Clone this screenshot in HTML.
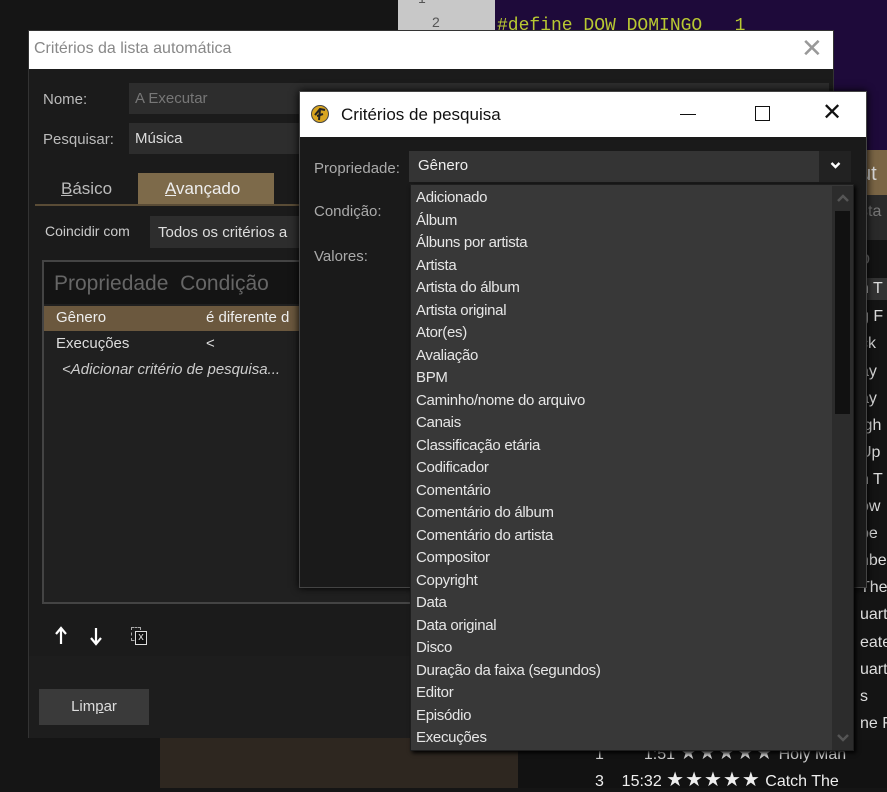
<!DOCTYPE html>
<html><head><meta charset="utf-8"><style>
*{margin:0;padding:0;box-sizing:border-box}
body{width:887px;height:788px;overflow:hidden;position:relative;background:#151515;font-family:"Liberation Sans","DejaVu Sans",sans-serif;font-size:15px;color:#ddd}
.a{position:absolute}
.it{position:absolute;left:5px;font-size:15px;color:#e6e6e6;letter-spacing:-0.3px}
.rt{position:absolute;left:860px;color:#ddd;font-size:16px;white-space:nowrap}
</style></head><body>
<div class="a" style="left:398px;top:0;width:97px;height:30px;background:#c8c8c8"></div>
<div class="a" style="left:418px;top:-10px;color:#555;font-size:14px">1</div>
<div class="a" style="left:432px;top:14px;color:#555;font-size:14px">2</div>
<div class="a" style="left:495px;top:0;width:392px;height:160px;background:#1e0a3a"></div>
<div class="a" style="left:497px;top:16px;color:#b8c832;font-family:'Liberation Mono',monospace;font-size:18px;white-space:pre">#define DOW_DOMINGO   1</div>
<div class="a" style="left:160px;top:738px;width:360px;height:50px;background:#2e2720"></div>
<div class="a" style="left:518px;top:738px;width:369px;height:50px;background:#121212"></div>
<div class="a" style="left:855px;top:150px;width:32px;height:45px;background:#7a6545"></div>
<div class="a" style="left:855px;top:195px;width:32px;height:45px;background:#2a2a2a"></div>
<div class="a" style="left:855px;top:240px;width:32px;height:500px;background:#141414"></div>
<div class="a" style="left:855px;top:278px;width:32px;height:22px;background:#333"></div>
<div class="rt" style="top:163px;font-size:20px">ut</div>
<div class="rt" style="top:203px;color:#777">sta</div>
<div class="rt" style="top:248px;color:#777;font-size:18px">o</div>
<div class="rt" style="top:280px">n T</div>
<div class="rt" style="top:308px">g F</div>
<div class="rt" style="top:335px">ck</div>
<div class="rt" style="top:363px">ay</div>
<div class="rt" style="top:390px">ay</div>
<div class="rt" style="top:417px">igh</div>
<div class="rt" style="top:444px">Up</div>
<div class="rt" style="top:471px">n T</div>
<div class="rt" style="top:498px">ow</div>
<div class="rt" style="top:525px">pe</div>
<div class="rt" style="top:552px">nbe</div>
<div class="rt" style="top:579px">The</div>
<div class="rt" style="top:606px">uart</div>
<div class="rt" style="top:634px">eate</div>
<div class="rt" style="top:661px">uart</div>
<div class="rt" style="top:688px">s</div>
<div class="rt" style="top:715px">ne Fo</div>
<div class="a" style="left:595px;top:740px;color:#ccc;font-size:16px;white-space:nowrap">1&nbsp;&nbsp;&nbsp;&nbsp;&nbsp;&nbsp;&nbsp;&nbsp;&nbsp;1:51 <span style="font-size:20px;letter-spacing:1px">★★★★★</span> Holy Man</div>
<div class="a" style="left:595px;top:767px;color:#eee;font-size:16px;white-space:nowrap">3&nbsp;&nbsp;&nbsp;&nbsp;15:32 <span style="font-size:20px;letter-spacing:1px">★★★★★</span> Catch The</div>

<div class="a" style="left:28px;top:30px;width:806px;height:708px;background:#1b1b1b;border:1px solid #333">
  <div class="a" style="left:0;top:0;width:804px;height:38px;background:#fff"></div>
  <div class="a" style="left:5px;top:9px;color:#888;font-size:16px">Critérios da lista automática</div>
  <div class="a" style="left:772px;top:2px;color:#999;font-size:26px;font-weight:100">✕</div>
  <div class="a" style="left:14px;top:60px;color:#bbb">Nome:</div>
  <div class="a" style="left:100px;top:52px;width:700px;height:31px;background:#2d2d2d"></div>
  <div class="a" style="left:106px;top:59px;color:#777">A Executar</div>
  <div class="a" style="left:14px;top:100px;color:#bbb">Pesquisar:</div>
  <div class="a" style="left:100px;top:92px;width:700px;height:31px;background:#2d2d2d"></div>
  <div class="a" style="left:106px;top:99px;color:#ddd">Música</div>
  <div class="a" style="left:32px;top:148px;font-size:17px;color:#bbb"><u>B</u>ásico</div>
  <div class="a" style="left:109px;top:142px;width:136px;height:32px;background:#7d6a4a"></div>
  <div class="a" style="left:136px;top:148px;font-size:17px;color:#eee"><u>A</u>vançado</div>
  <div class="a" style="left:6px;top:173px;width:300px;height:2px;background:#5a4c36"></div>
  <div class="a" style="left:16px;top:192px;color:#ccc;font-size:14px">Coincidir com</div>
  <div class="a" style="left:121px;top:185px;width:200px;height:32px;background:#2d2d2d"></div>
  <div class="a" style="left:129px;top:193px;color:#ddd;font-size:15px">Todos os critérios a</div>
  <div class="a" style="left:13px;top:229px;width:760px;height:344px;background:#202020;border:2px solid #444"></div>
  <div class="a" style="left:15px;top:231px;width:756px;height:42px;background:#141414"></div>
  <div class="a" style="left:25px;top:241px;color:#666;font-size:21px">Propriedade&nbsp;&nbsp;Condição</div>
  <div class="a" style="left:15px;top:275px;width:756px;height:25px;background:#6b583e"></div>
  <div class="a" style="left:27px;top:278px;color:#eee">Gênero</div>
  <div class="a" style="left:177px;top:278px;color:#eee">é diferente d</div>
  <div class="a" style="left:27px;top:304px;color:#ddd">Execuções</div>
  <div class="a" style="left:177px;top:304px;color:#ddd">&lt;</div>
  <div class="a" style="left:33px;top:330px;color:#ccc;font-style:italic">&lt;Adicionar critério de pesquisa...</div>
  <svg class="a" style="left:24px;top:595px" width="50" height="20" viewBox="0 0 50 20"><path d="M8 18V3M3 8l5-6 5 6" stroke="#fff" stroke-width="2.2" fill="none"/><path d="M43 2v15M38 12l5 6 5-6" stroke="#fff" stroke-width="2.2" fill="none"/></svg>
  <div class="a" style="left:102px;top:596px;width:10px;height:14px;border:1px dashed #aaa"></div>
  <div class="a" style="left:106px;top:600px;width:12px;height:14px;border:1px solid #ddd;color:#ddd;font-size:11px;line-height:11px;text-align:center;background:#111">x</div>
  <div class="a" style="left:0;top:625px;width:804px;height:82px;background:#1d1d1d"></div>
  <div class="a" style="left:10px;top:658px;width:110px;height:36px;background:#3a3a3a;color:#ddd;text-align:center;line-height:36px;font-size:15px">Lim<u>p</u>ar</div>
</div>

<div class="a" style="left:299px;top:91px;width:568px;height:497px;background:#1a1a1a;border:1px solid #444;box-shadow:0 0 8px #000">
  <div class="a" style="left:0;top:0;width:566px;height:45px;background:#fff"></div>
  <svg class="a" style="left:11px;top:11px" width="18" height="22" viewBox="0 0 18 22"><circle cx="9" cy="11" r="8.5" fill="#d9a520" stroke="#444"/><path d="M4 12 L9 6 L14 7 M9 6 L8 17 M6 13 L12 11" stroke="#222" stroke-width="2" fill="none"/></svg>
  <div class="a" style="left:41px;top:13px;color:#111;font-size:17px">Critérios de pesquisa</div>
  <div class="a" style="left:380px;top:22px;width:16px;height:1px;background:#111"></div>
  <div class="a" style="left:455px;top:14px;width:15px;height:15px;border:1px solid #111"></div>
  <div class="a" style="left:522px;top:6px;color:#111;font-size:24px;font-weight:100">✕</div>
  <div class="a" style="left:14px;top:68px;color:#aaa;font-size:15px">Propriedade:</div>
  <div class="a" style="left:14px;top:111px;color:#aaa;font-size:15px">Condição:</div>
  <div class="a" style="left:14px;top:156px;color:#aaa;font-size:15px">Valores:</div>
  <div class="a" style="left:109px;top:59px;width:410px;height:31px;background:#343434"></div>
  <div class="a" style="left:519px;top:59px;width:32px;height:31px;background:#222"></div>
  <svg class="a" style="left:530px;top:69px" width="11" height="9" viewBox="0 0 11 9"><path d="M1.5 2l4 4 4-4" stroke="#fff" stroke-width="2.4" fill="none"/></svg>
  <div class="a" style="left:118px;top:65px;color:#eee;font-size:15px">Gênero</div>
</div>
<div class="a" style="left:410px;top:184px;width:444px;height:567px;background:#383838;border:1px solid #1e1e1e;box-shadow:2px 2px 4px #000;overflow:hidden">
  <div class="a" style="left:421px;top:1px;width:21px;height:564px;background:#2c2c2c"></div>
  <div class="a" style="left:424px;top:26px;width:15px;height:203px;background:#111"></div>
  <svg class="a" style="left:425px;top:8px" width="14" height="10" viewBox="0 0 14 10"><path d="M2 8l5-5 5 5" stroke="#555" stroke-width="2.5" fill="none"/></svg>
  <svg class="a" style="left:425px;top:548px" width="14" height="10" viewBox="0 0 14 10"><path d="M2 2l5 5 5-5" stroke="#555" stroke-width="2.5" fill="none"/></svg>
  <div class="it" style="top:4px">Adicionado</div>
  <div class="it" style="top:26.5px">Álbum</div>
  <div class="it" style="top:49px">Álbuns por artista</div>
  <div class="it" style="top:71.5px">Artista</div>
  <div class="it" style="top:94px">Artista do álbum</div>
  <div class="it" style="top:116.5px">Artista original</div>
  <div class="it" style="top:139px">Ator(es)</div>
  <div class="it" style="top:161.5px">Avaliação</div>
  <div class="it" style="top:184px">BPM</div>
  <div class="it" style="top:206.5px">Caminho/nome do arquivo</div>
  <div class="it" style="top:229px">Canais</div>
  <div class="it" style="top:251.5px">Classificação etária</div>
  <div class="it" style="top:274px">Codificador</div>
  <div class="it" style="top:296.5px">Comentário</div>
  <div class="it" style="top:319px">Comentário do álbum</div>
  <div class="it" style="top:341.5px">Comentário do artista</div>
  <div class="it" style="top:364px">Compositor</div>
  <div class="it" style="top:386.5px">Copyright</div>
  <div class="it" style="top:409px">Data</div>
  <div class="it" style="top:431.5px">Data original</div>
  <div class="it" style="top:454px">Disco</div>
  <div class="it" style="top:476.5px">Duração da faixa (segundos)</div>
  <div class="it" style="top:499px">Editor</div>
  <div class="it" style="top:521.5px">Episódio</div>
  <div class="it" style="top:544px">Execuções</div>
</div>
</body></html>
